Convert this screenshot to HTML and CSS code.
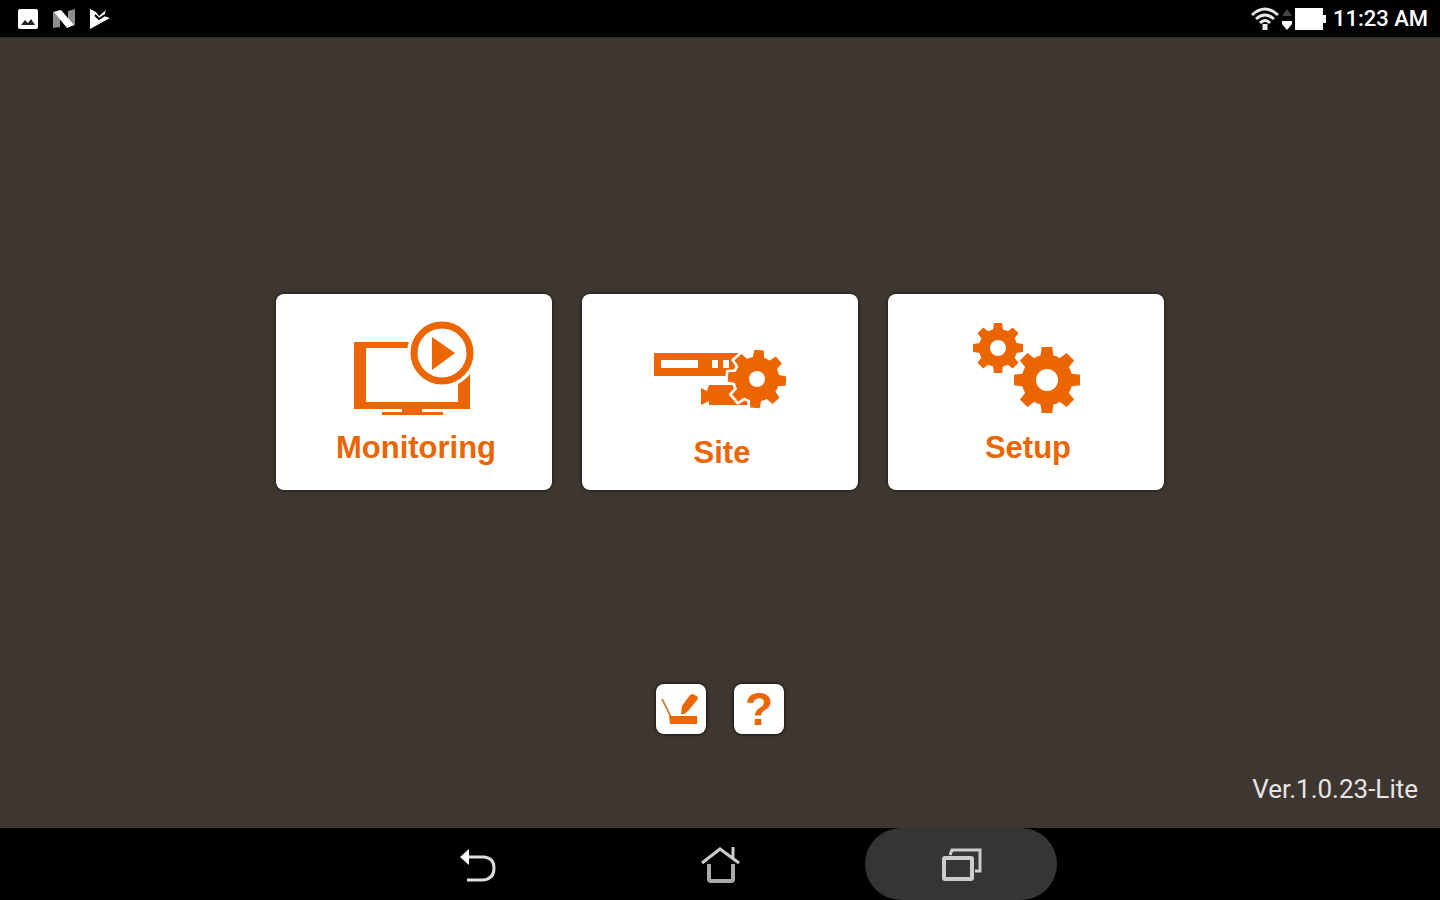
FILE: index.html
```
<!DOCTYPE html>
<html lang="en">
<head>
    <meta charset="UTF-8">
    <meta name="viewport" content="width=device-width, initial-scale=1.0">
    <title>Monitoring Lite</title>
    <link rel="stylesheet" href="styles.css">
</head>
<body>

    <!-- Gear shape shared by the Site and Setup icons -->
    <svg class="defs" aria-hidden="true">
        <symbol id="gear" viewBox="-100 -100 200 200" overflow="visible">
            <circle r="77"/>
            <g id="teeth">
                <path d="M-20-70L-16-100H16L20-70V70L16 100H-16L-20 70Z"/>
                <path d="M-20-70L-16-100H16L20-70V70L16 100H-16L-20 70Z" transform="rotate(45)"/>
                <path d="M-20-70L-16-100H16L20-70V70L16 100H-16L-20 70Z" transform="rotate(90)"/>
                <path d="M-20-70L-16-100H16L20-70V70L16 100H-16L-20 70Z" transform="rotate(135)"/>
            </g>
        </symbol>
    </svg>

    <!-- Status bar -->
    <header class="status-bar">
        <div class="status-left">
            <svg width="20" height="20" viewBox="0 0 20 20">
                <rect width="20" height="20" rx="2" fill="#fff"/>
                <path d="M3 16L7 11L10 14L13 10L17 16Z" fill="#222"/>
            </svg>
            <svg width="22" height="20" viewBox="0 0 22 20">
                <path d="M0 3L7 1V18L0 19ZM15 2L22 0V16L15 18Z" fill="#8d8d8d"/>
                <path d="M1 3L8 1L21 16L14 19Z" fill="#fff"/>
            </svg>
            <svg width="20" height="20" viewBox="0 0 20 20">
                <path d="M0 0L6 3L9 7L16 1L14 7L20 9L0 20Z" fill="#fff"/>
                <path d="M5 6L9 10L15 6" fill="none" stroke="#000" stroke-width="2"/>
            </svg>
        </div>
        <div class="status-right">
            <svg width="28" height="24" viewBox="0 0 28 24" fill="none" stroke="#e8e8e8" stroke-width="3">
                <path d="M1 8Q14-4 27 8M5 12Q14 4 23 12M9 16Q14 11 19 16"/>
                <path d="M14 17V23" stroke-width="5"/>
            </svg>
            <svg width="12" height="24" viewBox="0 0 12 24">
                <path d="M1 9L6 2L11 9Z" fill="#444"/>
                <path d="M1 14H11V17L6 23L1 17Z" fill="#fff"/>
            </svg>
            <svg width="32" height="22" viewBox="0 0 32 22">
                <path d="M0 0H28V7H31V15H28V22H0Z" fill="#fff"/>
            </svg>
            <span class="clock">11:23 AM</span>
        </div>
    </header>

    <main class="home">
        <!-- Main menu -->
        <div class="menu">
            <button class="card">
                <svg class="card-icon" viewBox="0 0 276 136">
                    <path fill-rule="evenodd" d="M78 48H194V115H78ZM90 54V108H182V54Z"/>
                    <path d="M126 115H146V118H167V121H106V118H126Z"/>
                    <circle class="blank" cx="166" cy="59" r="35"/>
                    <circle class="ring" cx="166" cy="59" r="28"/>
                    <path d="M156 43L179 59L156 76Z"/>
                </svg>
                <span class="card-label">Monitoring</span>
            </button>
            <button class="card">
                <svg class="card-icon card-icon-site" viewBox="0 0 276 141">
                    <path fill-rule="evenodd" d="M72 59H160V82H72ZM79 66V74H116V66ZM130 66V74H136V66ZM141 66V74H147V66Z"/>
                    <path d="M119 94L125 97L127 91H168V111H127V107L119 111Z"/>
                    <g transform="translate(175 85) rotate(4)">
                        <use class="gear-gap" href="#gear" x="-29" y="-29" width="58" height="58"/>
                        <use href="#gear" x="-29" y="-29" width="58" height="58"/>
                    </g>
                    <circle class="blank" cx="175" cy="85" r="8"/>
                </svg>
                <span class="card-label">Site</span>
            </button>
            <button class="card">
                <svg class="card-icon" viewBox="0 0 276 136">
                    <use href="#gear" x="85" y="29" width="50" height="50"/>
                    <circle class="blank" cx="110" cy="54" r="8"/>
                    <use href="#gear" x="126" y="53" width="66" height="66"/>
                    <circle class="blank" cx="159" cy="86" r="11"/>
                </svg>
                <span class="card-label">Setup</span>
            </button>
        </div>

        <!-- Small tools -->
        <div class="tools">
            <button class="tool" aria-label="Demo">
                <svg width="50" height="50" viewBox="0 0 50 50">
                    <path d="M6 15L15 33" fill="none" stroke="#c98a50" stroke-width="2"/>
                    <path d="M13 32H41V40H14Z"/>
                    <path d="M25 30L26 22L34 11L37 10L42 13L41 16L32 27L28 30Z"/>
                </svg>
            </button>
            <button class="tool">?</button>
        </div>

        <p class="version">Ver.1.0.23-Lite</p>
    </main>

    <!-- Navigation bar -->
    <nav class="nav-bar">
        <button class="nav-button" aria-label="Back">
            <svg width="40" height="40" viewBox="0 0 40 40" fill="none" stroke="#ddd" stroke-width="3">
                <path d="M9 13H25Q35 14 35 24Q35 35 24 36H8"/>
                <path d="M1 13L10 5V21Z" fill="#fff" stroke="none"/>
            </svg>
        </button>
        <button class="nav-button" aria-label="Home">
            <svg width="40" height="40" viewBox="0 0 40 40" fill="none" stroke="#ccc" stroke-width="3">
                <path d="M2 19L20 5L39 19M33 3V14"/>
                <path d="M9 20V35Q9 37 11 37H31Q33 37 33 35V20" stroke="#aaa" stroke-width="4"/>
            </svg>
        </button>
        <button class="nav-button active" aria-label="Recent apps">
            <svg width="42" height="40" viewBox="0 0 42 40" fill="none" stroke="#ccc" stroke-width="4">
                <rect x="4" y="14" width="28" height="21" rx="1"/>
                <path d="M10 11L12 6H40V27H35" stroke-width="3"/>
            </svg>
        </button>
    </nav>

</body>
</html>
```
FILE: styles.css
```
/* Global styling */
body {
    margin: 0;
    min-height: 100vh;
    display: flex;
    flex-direction: column;
    background-color: #3e3731;
    font-family: Roboto, sans-serif;
    color: #fff;
}

button {
    margin: 0;
    padding: 0;
    border: none;
    cursor: pointer;
}

.defs {
    display: none;
}

/* Status bar */
.status-bar {
    height: 37px;
    padding: 0 12px 0 18px;
    display: flex;
    justify-content: space-between;
    align-items: center;
    background-color: #000;
    border-bottom: 2px solid #37332e;
}

.status-left {
    display: flex;
    align-items: center;
    gap: 15px;
}

.status-right {
    display: flex;
    align-items: center;
    gap: 2px;
}

.clock {
    margin-left: 4px;
    font-size: 22px;
    font-weight: 500;
    line-height: 24px;
}

/* Home screen */
.home {
    flex: 1;
    display: flex;
    flex-direction: column;
    align-items: center;
    padding-top: 255px;
}

.menu {
    display: flex;
    gap: 30px;
}

.card {
    width: 276px;
    height: 196px;
    display: flex;
    flex-direction: column;
    align-items: center;
    background-color: #fff;
    border-radius: 8px;
    box-shadow: 0 0 3px 1px #24201a;
    color: #eb6500;
    fill: #eb6500;
}

.card-icon {
    width: 276px;
    height: 136px;
}

.card-icon-site {
    height: 141px;
}

.card-label {
    padding-left: 4px;
    font-family: "Liberation Sans", Arial, sans-serif;
    font-size: 31px;
    font-weight: bold;
    line-height: 36px;
}

.blank {
    fill: #fff;
}

.ring {
    fill: none;
    stroke: #eb6500;
    stroke-width: 7px;
}

.gear-gap {
    fill: #fff;
    stroke: #fff;
    stroke-width: 18px;
}

/* Small tool buttons */
.tools {
    display: flex;
    gap: 28px;
    margin-top: 194px;
}

.tool {
    width: 50px;
    height: 50px;
    background-color: #fff;
    border-radius: 8px;
    box-shadow: 0 0 3px 1px #1a1713;
    color: #eb6500;
    fill: #eb6500;
    font-family: "Liberation Sans", Arial, sans-serif;
    font-size: 46px;
    font-weight: bold;
    line-height: 50px;
}

.tool svg {
    display: block;
}

.version {
    align-self: flex-end;
    margin: auto 22px 24px 0;
    font-size: 26px;
    line-height: 30px;
    color: #e6e4e2;
}

/* Navigation bar */
.nav-bar {
    display: flex;
    justify-content: center;
    gap: 49px;
    background-color: #000;
}

.nav-button {
    width: 192px;
    height: 72px;
    display: flex;
    justify-content: center;
    align-items: center;
    background-color: transparent;
    border-radius: 36px;
}

.nav-button.active {
    background-color: #353535;
}
```
